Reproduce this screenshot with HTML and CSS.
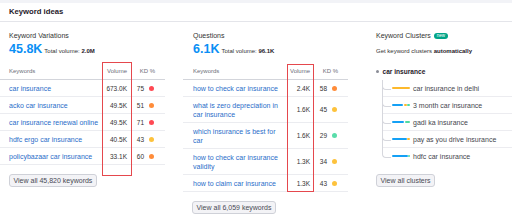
FILE: index.html
```html
<!DOCTYPE html>
<html lang="en">
<head>
<meta charset="utf-8">
<title>Keyword ideas</title>
<link rel="stylesheet" href="styles.css">
</head>
<body>
<div class="topbar"></div>
<main class="card">
  <header class="card-head">Keyword ideas</header>
  <div class="cols">
    <section class="col col-var">
      <h3 class="col-title">Keyword Variations</h3>
      <div class="stat"><span class="big">45.8K</span><span class="total">Total volume: <b>2.0M</b></span></div>
      <div class="kw-table">
        <div class="kw-row kw-head"><span class="c-kw">Keywords</span><span class="c-vol">Volume</span><span class="c-kd">KD %</span></div>
        <div class="kw-row"><a class="c-kw">car insurance</a><span class="c-vol">673.0K</span><span class="c-kd">75<i class="dot red"></i></span></div>
        <div class="kw-row"><a class="c-kw">acko car insurance</a><span class="c-vol">49.5K</span><span class="c-kd">51<i class="dot orange"></i></span></div>
        <div class="kw-row"><a class="c-kw">car insurance renewal online</a><span class="c-vol">49.5K</span><span class="c-kd">71<i class="dot red"></i></span></div>
        <div class="kw-row"><a class="c-kw">hdfc ergo car insurance</a><span class="c-vol">40.5K</span><span class="c-kd">43<i class="dot yellow"></i></span></div>
        <div class="kw-row"><a class="c-kw">policybazaar car insurance</a><span class="c-vol">33.1K</span><span class="c-kd">60<i class="dot orange"></i></span></div>
      </div>
      <button class="btn">View all 45,820 keywords</button>
      <div class="highlight hl-var"></div>
    </section>

    <section class="col col-q">
      <h3 class="col-title">Questions</h3>
      <div class="stat"><span class="big">6.1K</span><span class="total">Total volume: <b>96.1K</b></span></div>
      <div class="kw-table">
        <div class="kw-row kw-head"><span class="c-kw">Keywords</span><span class="c-vol">Volume</span><span class="c-kd">KD %</span></div>
        <div class="kw-row"><a class="c-kw">how to check car insurance</a><span class="c-vol">2.4K</span><span class="c-kd">58<i class="dot orange"></i></span></div>
        <div class="kw-row"><a class="c-kw">what is zero depreciation in car insurance</a><span class="c-vol">1.6K</span><span class="c-kd">45<i class="dot yellow"></i></span></div>
        <div class="kw-row"><a class="c-kw">which insurance is best for car</a><span class="c-vol">1.6K</span><span class="c-kd">29<i class="dot green"></i></span></div>
        <div class="kw-row"><a class="c-kw">how to check car insurance validity</a><span class="c-vol">1.3K</span><span class="c-kd">34<i class="dot yellow"></i></span></div>
        <div class="kw-row"><a class="c-kw">how to claim car insurance</a><span class="c-vol">1.3K</span><span class="c-kd">43<i class="dot yellow"></i></span></div>
      </div>
      <button class="btn">View all 6,059 keywords</button>
      <div class="highlight hl-q"></div>
    </section>

    <section class="col col-cl">
      <h3 class="col-title">Keyword Clusters <span class="badge">new</span></h3>
      <p class="cl-sub">Get keyword clusters <b>automatically</b></p>
      <div class="tree">
        <div class="tree-root"><i class="root-dot"></i>car insurance</div>
        <ul class="tree-children">
          <li><span class="bar"><i class="seg y" style="width:18px"></i></span>car insurance in delhi</li>
          <li><span class="bar"><i class="seg b" style="width:11px"></i><i class="seg y" style="width:3px"></i><i class="seg g" style="width:3px"></i></span>3 month car insurance</li>
          <li><span class="bar"><i class="seg b" style="width:12px"></i><i class="seg g" style="width:5px"></i></span>gadi ka insurance</li>
          <li><span class="bar"><i class="seg b" style="width:14.5px"></i><i class="seg y" style="width:2.5px"></i></span>pay as you drive insurance</li>
          <li><span class="bar"><i class="seg b" style="width:15.5px"></i><i class="seg g" style="width:1.5px"></i></span>hdfc car insurance</li>
        </ul>
      </div>
      <button class="btn">View all clusters</button>
    </section>
  </div>
</main>
</body>
</html>
```

FILE: styles.css
```css
* {
  box-sizing: border-box;
  margin: 0;
  padding: 0;
}

html, body {
  width: 512px;
  height: 223px;
  overflow: hidden;
  background: #ffffff;
}

body {
  font-family: "Liberation Sans", Arial, sans-serif;
  color: #333;
}

.topbar {
  height: 3px;
  background: #f2f3f7;
}

.card-head {
  height: 19px;
  border-bottom: 1px solid #e4e5ea;
  padding-left: 9px;
  font-size: 7.7px;
  font-weight: 700;
  line-height: 18px;
  color: #1f2029;
}

.cols {
  display: grid;
  grid-template-columns: 165px 165px 1fr;
  column-gap: 18px;
}

.col {
  position: relative;
  padding-top: 8.5px;
  --pad: 9px;
}

.col-q {
  --pad: 10px;
}

.col-cl {
  padding-left: 10px;
}

.col-title {
  font-size: 7px;
  font-weight: 400;
  line-height: 9px;
  color: #333;
  padding-left: var(--pad);
}

.col-cl .col-title {
  padding-left: 0;
}

.stat {
  display: flex;
  align-items: baseline;
  gap: 2px;
  margin-top: 2.5px;
  padding-left: var(--pad);
  height: 14px;
  line-height: 14px;
}

.big {
  font-size: 12.5px;
  font-weight: 700;
  color: #0a8ff5;
}

.total {
  font-size: 6px;
  color: #333;
}

.total b {
  color: #1f2029;
}

.kw-table {
  margin-top: 7px;
}

.kw-row {
  display: grid;
  grid-template-columns: 1fr 30px 35px;
  align-items: center;
  padding: 3.5px 0;
  line-height: 9px;
  border-bottom: 1px solid #ebecf0;
  font-size: 6.5px;
  color: #333;
}

.kw-head {
  font-size: 6px;
  color: #6c6e79;
  border-bottom-color: #d3d5db;
}

.c-kw {
  padding-left: var(--pad);
  padding-right: 2px;
}

.col-var .c-kw {
  padding-right: 0;
  white-space: nowrap;
}

a.c-kw {
  font-size: 7px;
  color: #2a6dc9;
  text-decoration: none;
}

.c-vol {
  text-align: right;
  padding-right: 3px;
}

.c-kd {
  display: flex;
  justify-content: flex-end;
  align-items: center;
  gap: 5px;
  padding-right: 11px;
}

.kw-head .c-kd {
  padding-right: 10px;
}

.dot {
  display: block;
  width: 5px;
  height: 5px;
  border-radius: 50%;
}

.dot.red { background: #ff4953; }
.dot.orange { background: #ff8c3a; }
.dot.yellow { background: #fdc23c; }
.dot.green { background: #59ddaa; }

.btn {
  display: block;
  margin-top: 9px;
  margin-left: 9px;
  height: 13px;
  padding: 0 3.5px;
  font-family: "Liberation Sans", Arial, sans-serif;
  font-size: 7px;
  line-height: 11px;
  color: #484a54;
  background: #f3f3f6;
  border: 1px solid #cfd1d8;
  border-radius: 3px;
}

.col-cl .btn {
  margin-left: 0;
  margin-top: 10px;
}

.highlight {
  position: absolute;
  border: 1.5px solid #e5484d;
  pointer-events: none;
}

.hl-var {
  left: 102px;
  top: 40px;
  width: 30px;
  height: 114px;
}

.hl-q {
  left: 104px;
  top: 42px;
  width: 27px;
  height: 128px;
}

/* Clusters */
.badge {
  display: inline-block;
  vertical-align: 1px;
  margin-left: 1px;
  height: 6px;
  padding: 0 3px;
  font-size: 4.5px;
  line-height: 6px;
  color: #fff;
  background: #00a488;
  border-radius: 3px;
}

.cl-sub {
  margin-top: 7px;
  font-size: 6px;
  line-height: 9px;
  color: #333;
}

.cl-sub b {
  color: #1f2029;
}

.tree {
  margin-top: 7.5px;
}

.tree-root {
  display: flex;
  align-items: center;
  height: 17px;
  padding-bottom: 1px;
  font-size: 6.6px;
  font-weight: 700;
  color: #1f2029;
}

.root-dot {
  display: block;
  width: 3px;
  height: 3px;
  border-radius: 50%;
  background: #8a8c96;
  margin-right: 3.5px;
}

.tree-children {
  list-style: none;
  margin-left: 5.5px;
}

.tree-children li {
  position: relative;
  display: flex;
  align-items: center;
  height: 17px;
  padding-left: 10.5px;
  border-bottom: 1px solid #ececf0;
  font-size: 7px;
  color: #44454d;
}

.tree-children li:last-child {
  border-bottom: none;
  height: 16px;
}

.tree-children li::before {
  content: "";
  position: absolute;
  left: 0;
  top: 0;
  width: 8px;
  height: 8.5px;
  border-left: 1px solid #d6d7dd;
  border-bottom: 1px solid #d6d7dd;
  border-bottom-left-radius: 4px;
}

.tree-children li:not(:last-child)::after {
  content: "";
  position: absolute;
  left: 0;
  top: 4px;
  bottom: -1px;
  border-left: 1px solid #d6d7dd;
}

.bar {
  display: flex;
  gap: 0.5px;
  width: 18px;
  height: 2.5px;
  margin-right: 3px;
}

.seg {
  display: block;
  height: 100%;
  border-radius: 1px;
}

.seg.b { background: #14a0f5; }
.seg.y { background: #fdb92c; }
.seg.g { background: #4fdba0; }
```
